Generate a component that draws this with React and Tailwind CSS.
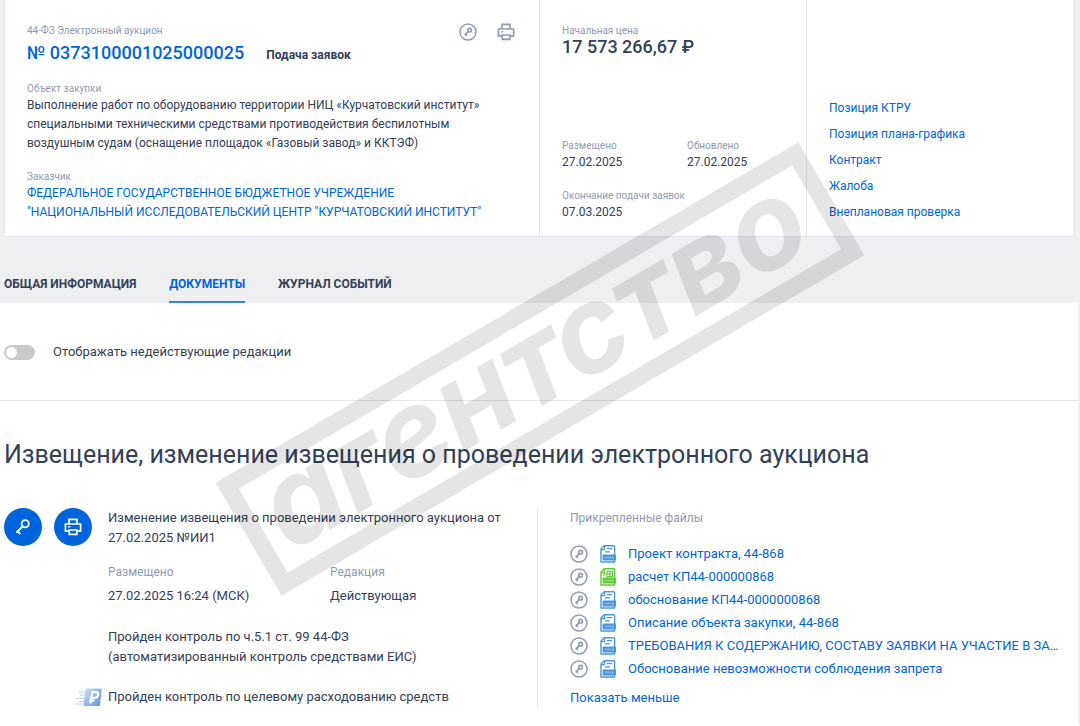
const KeyGlyph = ({ className }) => (
  <svg viewBox="0 0 18 18" className={className} fill="none" stroke="currentColor" aria-hidden="true">
    <circle cx="11.2" cy="5.8" r="3.6" strokeWidth="1.8" />
    <path d="M8.6 8.4 3 14M3.6 13.2l2 2.2" strokeWidth="2" strokeLinecap="round" />
  </svg>
);

const KeyCircle = ({ className }) => (
  <svg viewBox="0 0 18 18" className={className} fill="none" stroke="currentColor" aria-hidden="true">
    <circle cx="9" cy="9" r="8" strokeWidth="1.5" />
    <circle cx="10.6" cy="7.2" r="1.8" strokeWidth="1.6" />
    <path d="M9.2 8.6 6.2 11.6M6.4 11.2l1 1.2" strokeWidth="1.7" strokeLinecap="round" />
  </svg>
);

const PrinterGlyph = ({ className }) => (
  <svg viewBox="0 0 18 18" className={className} fill="none" stroke="currentColor" strokeWidth="1.7" aria-hidden="true">
    <path d="M5 5.8V1.4h8v4.4" />
    <path d="M5 13.2H1.4V6h15.2v7.2H13" strokeLinejoin="round" />
    <path d="M5.2 12h7.6v4.4H5.2z" />
    <path d="M4 8.8h2.4" strokeWidth="1.4" />
  </svg>
);

const FileGlyph = ({ sheet }) => (
  <svg
    viewBox="0 0 16 18"
    className={sheet ? 'w-4 h-[18px] shrink-0 text-[#5fca35]' : 'w-4 h-[18px] shrink-0 text-[#4a98dc]'}
    fill="none"
    stroke="currentColor"
    aria-hidden="true"
  >
    <path d="M1 17V4l3.2-3.2h9.4q1 0 1 1V17z" strokeWidth="1.4" strokeLinejoin="round" />
    <path d="M1 4.6h3.6V1" strokeWidth="1.2" />
    {sheet ? (
      <path d="M7 3.2h5.4v5.4H7zM4 8.4V6h8.4M9.8 3.2v5.4" strokeWidth="1.1" />
    ) : (
      <path d="M7 3.6h5.2M5 6.8h5" strokeWidth="1.3" />
    )}
    <rect x="2.6" y="9.4" width="13.4" height="6.2" rx="0.8" fill="currentColor" stroke="none" />
    <path d="M4.8 12.5h9" stroke="#fff" strokeOpacity="0.35" strokeWidth="1.8" strokeDasharray="1.7 0.7" />
  </svg>
);

const RubleBadge = () => (
  <svg viewBox="0 0 28 20" className="w-7 h-5 shrink-0" aria-hidden="true">
    <defs>
      <linearGradient id="ruble" x1="0" y1="0" x2="1" y2="1">
        <stop offset="0" stopColor="#cfe1f5" />
        <stop offset="1" stopColor="#5b94d6" />
      </linearGradient>
    </defs>
    <path d="M3 5h8M5 8h6M1 11.5h9M4 14.5h6M0 17h9" stroke="#bcd3ee" strokeWidth="1" />
    <path d="M11.5 1.5H26q1 0 .9 1L25 18q-.1 1-1.1 1H9.5q-1 0-.9-1l1.9-15.5q.1-1 1-1z" fill="url(#ruble)" />
    <path d="M15.5 16.5 17.3 5h3.2q3 0 2.6 3-.4 2.8-3.4 2.8h-4.8M14 13.6h5.5" fill="none" stroke="#fff" strokeWidth="2" />
  </svg>
);

const Watermark = () => (
  <svg
    viewBox="0 0 650 458"
    className="absolute left-[215px] top-[140px] w-[650px] h-[458px] pointer-events-none text-black/10"
    aria-hidden="true"
  >
    <g transform="translate(325 229) rotate(-30.3)" fill="currentColor">
      <rect x="-329" y="-57" width="658" height="114" fill="none" stroke="currentColor" strokeWidth="17" />
      <text
        x="-3"
        y="33"
        textAnchor="middle"
        className="font-['Inter',sans-serif] font-bold italic text-[121px] [font-feature-settings:'cv11']"
      >
        агентство
      </text>
    </g>
  </svg>
);

const Label = ({ children }) => <div className="text-[10px] leading-3 text-[#8d9bb5]">{children}</div>;

const quickLinks = ['Позиция КТРУ', 'Позиция плана-графика', 'Контракт', 'Жалоба', 'Внеплановая проверка'];

const files = [
  { name: 'Проект контракта, 44-868' },
  { name: 'расчет КП44-000000868', sheet: true },
  { name: 'обоснование КП44-0000000868' },
  { name: 'Описание объекта закупки, 44-868' },
  { name: 'ТРЕБОВАНИЯ К СОДЕРЖАНИЮ, СОСТАВУ ЗАЯВКИ НА УЧАСТИЕ В ЗА…' },
  { name: 'Обоснование невозможности соблюдения запрета' },
];

const PurchaseCard = () => (
  <section className="grid grid-cols-[2fr_1fr_1fr] bg-white border border-t-0 border-[#e3e6eb] text-xs leading-[19px]">
    {/* Purchase */}
    <div className="pl-[22px] pr-6 pt-[23px] pb-[14px]">
      <div className="flex items-start justify-between">
        <div className="pt-0.5">
          <Label>44-ФЗ Электронный аукцион</Label>
          <div className="flex items-baseline gap-[22px] mt-1">
            <a href="#purchase" className="text-lg leading-6 font-medium text-[#0065dc]">№ 0373100001025000025</a>
            <span className="font-bold">Подача заявок</span>
          </div>
        </div>
        <div className="flex gap-5 text-[#8d9bb5]">
          <button type="button" aria-label="Подпись"><KeyCircle className="size-[18px]" /></button>
          <button type="button" aria-label="Печать"><PrinterGlyph className="size-[18px]" /></button>
        </div>
      </div>
      <div className="mt-[18px]">
        <Label>Объект закупки</Label>
        <p className="mt-px">
          Выполнение работ по оборудованию территории НИЦ «Курчатовский институт»<br />
          специальными техническими средствами противодействия беспилотным<br />
          воздушным судам (оснащение площадок «Газовый завод» и ККТЭФ)
        </p>
      </div>
      <div className="mt-[18px]">
        <Label>Заказчик</Label>
        <a href="#customer" className="block mt-px text-[#0065dc]">
          ФЕДЕРАЛЬНОЕ ГОСУДАРСТВЕННОЕ БЮДЖЕТНОЕ УЧРЕЖДЕНИЕ<br />
          "НАЦИОНАЛЬНЫЙ ИССЛЕДОВАТЕЛЬСКИЙ ЦЕНТР "КУРЧАТОВСКИЙ ИНСТИТУТ"
        </a>
      </div>
    </div>

    {/* Price and dates */}
    <div className="flex flex-col justify-between border-l border-[#e3e6eb] px-[22px] pt-[25px] pb-[14px]">
      <div>
        <Label>Начальная цена</Label>
        <div className="text-lg leading-5 font-medium">17 573 266,67 ₽</div>
      </div>
      <div>
        <div className="grid grid-cols-[125px_1fr]">
          <div>
            <Label>Размещено</Label>
            <div className="mt-px">27.02.2025</div>
          </div>
          <div>
            <Label>Обновлено</Label>
            <div className="mt-px">27.02.2025</div>
          </div>
        </div>
        <div className="mt-[18px]">
          <Label>Окончание подачи заявок</Label>
          <div className="mt-px">07.03.2025</div>
        </div>
      </div>
    </div>

    {/* Related links */}
    <nav className="flex flex-col items-start justify-end gap-[7px] border-l border-[#e3e6eb] px-[22px] pb-[14px]">
      {quickLinks.map((link) => (
        <a key={link} href="#related" className="text-[#0065dc]">{link}</a>
      ))}
    </nav>
  </section>
);

const App = () => (
  <div className="relative overflow-hidden bg-white font-['Roboto',sans-serif] text-[#334059]">
    <header className="bg-[#eeeff1]">
      <div className="pl-1 pr-1.5">
        <PurchaseCard />
      </div>
      <nav className="flex gap-[33px] pl-1 pt-[38px] text-xs font-bold">
        <a href="#common" className="pb-2.5 leading-[18px]">ОБЩАЯ ИНФОРМАЦИЯ</a>
        <a href="#documents" className="pb-2 leading-[18px] border-b-2 border-[#2f86e0] text-[#0065dc]">ДОКУМЕНТЫ</a>
        <a href="#journal" className="pb-2.5 leading-[18px]">ЖУРНАЛ СОБЫТИЙ</a>
      </nav>
    </header>

    <main className="border-r-2 border-[#eeeff1]">
      <div className="border-b border-[#e3e6eb] pl-1 pt-[39px] pb-[38px]">
        <label className="flex items-center gap-[18px] text-[13px] leading-5">
          <input type="checkbox" className="peer sr-only" />
          <span className="flex w-[31px] h-[15px] items-center rounded-full bg-[#c9c9c9] px-[2px] peer-checked:justify-end">
            <span className="size-[11px] rounded-full bg-white" />
          </span>
          Отображать недействующие редакции
        </label>
      </div>

      <h1 className="pl-1 pt-[38px] text-[25px] leading-8">
        Извещение, изменение извещения о проведении электронного аукциона
      </h1>

      <div className="grid grid-cols-2 pt-[37px] pb-4 pr-1 text-[13px] leading-5">
        {/* Notice */}
        <div className="flex pl-1">
          <div className="flex w-[104px] shrink-0 gap-3">
            <button type="button" aria-label="Подпись" className="flex size-[38px] items-center justify-center rounded-full bg-[#0065dc] text-white">
              <KeyGlyph className="size-[18px]" />
            </button>
            <button type="button" aria-label="Печать" className="flex size-[38px] items-center justify-center rounded-full bg-[#0065dc] text-white">
              <PrinterGlyph className="size-[18px]" />
            </button>
          </div>
          <div>
            <p>
              Изменение извещения о проведении электронного аукциона от<br />
              27.02.2025 №ИИ1
            </p>
            <dl className="grid grid-cols-[222px_1fr] mt-[14px]">
              <div>
                <dt className="text-xs leading-5 text-[#8d9bb5]">Размещено</dt>
                <dd className="mt-1">27.02.2025 16:24 (МСК)</dd>
              </div>
              <div>
                <dt className="text-xs leading-5 text-[#8d9bb5]">Редакция</dt>
                <dd className="mt-1">Действующая</dd>
              </div>
            </dl>
            <p className="mt-[21px]">
              Пройден контроль по ч.5.1 ст. 99 44-ФЗ<br />
              (автоматизированный контроль средствами ЕИС)
            </p>
            <div className="-ml-[33px] mt-5 flex items-center gap-[5px]">
              <RubleBadge />
              <span>Пройден контроль по целевому расходованию средств</span>
            </div>
          </div>
        </div>

        {/* Attachments */}
        <div className="min-w-0 border-l border-[#e3e6eb] pl-8">
          <h2 className="text-xs leading-5 text-[#8d9bb5]">Прикрепленные файлы</h2>
          <ul className="mt-[14px]">
            {files.map((file) => (
              <li key={file.name} className="flex h-[23px] items-center">
                <KeyCircle className="mr-3 size-[18px] shrink-0 text-[#8d9bb5]" />
                <FileGlyph sheet={file.sheet} />
                <a href="#file" className="ml-3 truncate text-[#0065dc]">{file.name}</a>
              </li>
            ))}
          </ul>
          <button type="button" className="mt-2 text-[#0065dc]">Показать меньше</button>
        </div>
      </div>
    </main>

    <Watermark />
  </div>
);

export default App;
